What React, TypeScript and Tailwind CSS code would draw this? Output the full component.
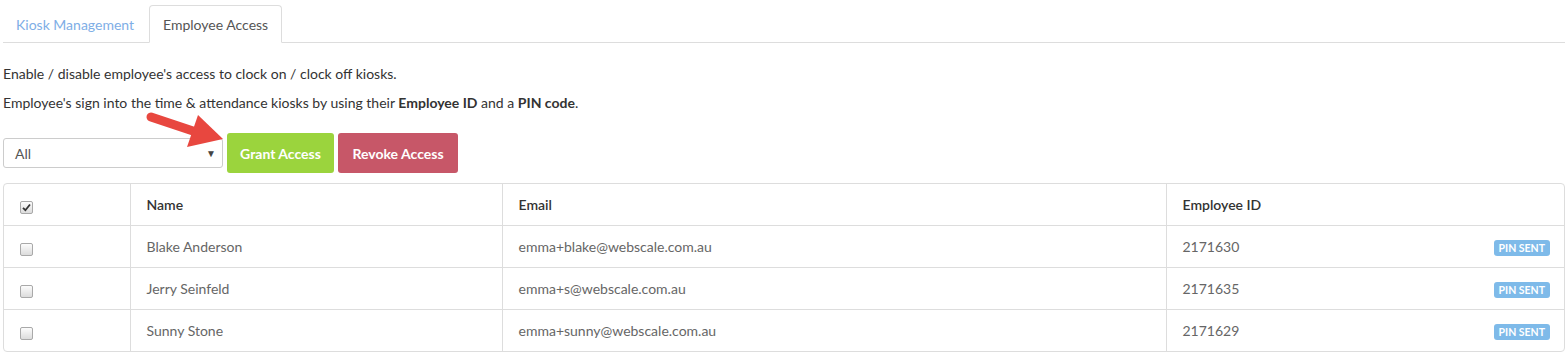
import React from "react";

const rows = [
  { name: "Blake Anderson", email: "emma+blake@webscale.com.au", id: "2171630" },
  { name: "Jerry Seinfeld", email: "emma+s@webscale.com.au", id: "2171635" },
  { name: "Sunny Stone", email: "emma+sunny@webscale.com.au", id: "2171629" },
];

function Box({ checked }: { checked?: boolean }) {
  return (
    <span className="inline-flex h-[13px] w-[13px] items-center justify-center rounded-[2px] border border-[#a9a9a9] bg-gradient-to-b from-[#fcfcfc] to-[#dcdcdc]">
      {checked && (
        <svg width="9" height="9" viewBox="0 0 9 9">
          <path d="M1 4.8 L3.4 7.2 L8 1.5" fill="none" stroke="#333" strokeWidth="1.8" />
        </svg>
      )}
    </span>
  );
}

export default function App() {
  return (
    <div className="relative w-[1568px] h-[357px] bg-white px-[3px] text-[14px] text-[#333]" style={{ fontFamily: "Lato, 'Open Sans', sans-serif" }}>
      {/* tabs */}
      <div className="flex pt-[5px] border-b border-[#ddd] h-[43px]">
        <div className="h-[38px] px-[13px] mr-[2px] flex items-center text-[#7eaee6]">Kiosk Management</div>
        <div className="h-[38px] px-[13px] flex items-center border border-[#ddd] border-b-white rounded-t-[4px] bg-white text-[#555] -mb-px">Employee Access</div>
      </div>

      <p className="mt-[21px] leading-[20px]">Enable / disable employee's access to clock on / clock off kiosks.</p>
      <p className="mt-[9px] leading-[20px]">
        Employee's sign into the time &amp; attendance kiosks by using their <b className="font-bold">Employee ID</b> and a <b className="font-bold">PIN code</b>.
      </p>

      {/* controls */}
      <div className="mt-[20px] flex items-center h-[40px]">
        <div className="w-[220px] h-[30px] border border-[#ccc] rounded-[3px] flex items-center justify-between pl-[11px] pr-[6px] text-[#555]">
          <span>All</span>
          <span className="text-[10px] text-[#444]">▼</span>
        </div>
        <button className="ml-[4px] h-[40px] w-[107px] rounded-[3px] bg-[#9bd43d] text-white font-bold text-[14px]">Grant Access</button>
        <button className="ml-[4px] h-[40px] w-[120px] rounded-[3px] bg-[#c75768] text-white font-bold text-[14px]">Revoke Access</button>
      </div>

      {/* table */}
      <div className="mt-[10px] border border-[#ddd] rounded-[4px] overflow-hidden">
        <table className="w-full border-collapse table-fixed">
          <colgroup>
            <col className="w-[126px]" />
            <col className="w-[372px]" />
            <col className="w-[664px]" />
            <col />
          </colgroup>
          <thead>
            <tr className="h-[41px]">
              <th className="pl-[16px] text-left align-middle border-r border-[#ddd]"><span className="relative top-[2px]"><Box checked /></span></th>
              <th className="pl-[16px] text-left font-semibold text-[#333] border-r border-[#ddd]">Name</th>
              <th className="pl-[16px] text-left font-semibold text-[#333] border-r border-[#ddd]">Email</th>
              <th className="pl-[16px] text-left font-semibold text-[#333]">Employee ID</th>
            </tr>
          </thead>
          <tbody>
            {rows.map((r) => (
              <tr key={r.id} className="h-[42px] border-t border-[#ddd] text-[#666]">
                <td className="pl-[16px] border-r border-[#ddd]"><span className="relative top-[4px]"><Box /></span></td>
                <td className="pl-[16px] border-r border-[#ddd]">{r.name}</td>
                <td className="pl-[16px] border-r border-[#ddd]">{r.email}</td>
                <td className="pl-[16px] pr-[14px]">
                  <div className="flex items-center justify-between">
                    <span>{r.id}</span>
                    <span className="mt-[4px] rounded-[3px] bg-[#7ebae9] px-[5px] h-[16px] leading-[16px] text-[10.5px] font-bold text-white">PIN SENT</span>
                  </div>
                </td>
              </tr>
            ))}
          </tbody>
        </table>
      </div>

      {/* annotation arrow */}
      <svg className="absolute left-0 top-0 pointer-events-none" width="1568" height="357">
        <line x1="151" y1="117" x2="196" y2="132" stroke="#e8473f" strokeWidth="9" strokeLinecap="round" />
        <polygon points="198,115 223,139 187,147" fill="#e8473f" />
      </svg>
    </div>
  );
}
